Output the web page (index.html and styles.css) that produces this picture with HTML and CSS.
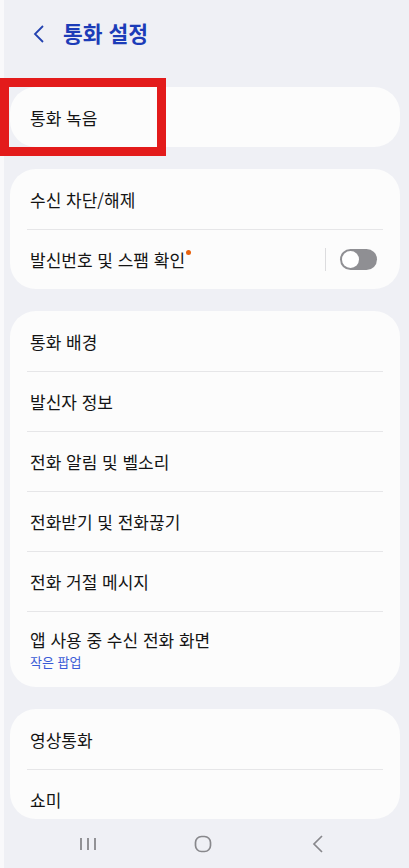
FILE: index.html
```html
<!DOCTYPE html>
<html lang="ko">
<head>
    <meta charset="UTF-8"/>
    <title>통화 설정</title>
    <link rel="stylesheet" href="styles.css">
</head>
<body>
<div class="screen">
    <div class="header">
        <span class="back">
            <svg width="12" height="18" viewBox="0 0 12 18"><path d="M10 1 L2 9 L10 17" fill="none" stroke="#2342b0" stroke-width="1.8"/></svg>
        </span>
        <h1>통화 설정</h1>
    </div>

    <div class="list">
        <div class="card">
            <div class="row">통화 녹음</div>
        </div>

        <div class="card">
            <div class="row">수신 차단/해제</div>
            <div class="row line">
                <span class="label">발신번호 및 스팸 확인<i class="dot"></i></span>
                <span class="sep"></span>
                <span class="toggle"><b></b></span>
            </div>
        </div>

        <div class="card">
            <div class="row">통화 배경</div>
            <div class="row line">발신자 정보</div>
            <div class="row line">전화 알림 및 벨소리</div>
            <div class="row line">전화받기 및 전화끊기</div>
            <div class="row line">전화 거절 메시지</div>
            <div class="row line tall">
                <div>앱 사용 중 수신 전화 화면</div>
                <div class="sub">작은 팝업</div>
            </div>
        </div>

        <div class="card">
            <div class="row">영상통화</div>
            <div class="row line">쇼미</div>
        </div>
    </div>

    <div class="navbar">
        <span class="nav-btn"><svg width="18" height="14" viewBox="0 0 18 14"><path d="M2 1v12M9 1v12M16 1v12" stroke="#88888c" stroke-width="1.8"/></svg></span>
        <span class="nav-btn"><svg width="18" height="18" viewBox="0 0 18 18"><rect x="1.5" y="1.5" width="15" height="15" rx="6" fill="none" stroke="#88888c" stroke-width="1.7"/></svg></span>
        <span class="nav-btn"><svg width="12" height="18" viewBox="0 0 12 18"><path d="M10 1 L2 9 L10 17" fill="none" stroke="#88888c" stroke-width="1.7"/></svg></span>
    </div>

    <!--강조 표시-->
    <div class="mark"></div>
</div>
</body>
</html>
```

FILE: styles.css
```css
* {
    margin: 0;
    padding: 0;
    box-sizing: border-box;
}

body {
    background-color: #f9f9fb;
    font-family: "Noto Sans CJK KR", "Noto Sans", sans-serif;
    color: #141414;
}

.screen {
    position: relative;
    margin-left: 4px;
    height: 868px;
    background-color: #eff0f5;
}

.header {
    height: 87px;
    display: flex;
    align-items: flex-start;
    padding: 22px 0 0 29px;
}

.back {
    width: 12px;
    height: 18px;
    margin-top: 2px;
}

.header h1 {
    margin-left: 18px;
    font-size: 21.5px;
    line-height: 22px;
    font-weight: 700;
    color: #1c3cb8;
}

.list {
    margin: 0 9px 0 6px;
    height: 732px;
    border-radius: 0 0 26px 26px;
    overflow: hidden;
}

.card {
    background-color: #fcfcfc;
    border-radius: 26px;
    margin-bottom: 22px;
}

.row {
    height: 60px;
    padding: 0 17px 0 20px;
    display: flex;
    align-items: center;
    font-size: 17px;
    position: relative;
}

.row.line::before {
    content: "";
    position: absolute;
    left: 17px;
    right: 17px;
    top: 0;
    height: 1px;
    background-color: #e6e6e8;
}

.row.tall {
    height: 76px;
    flex-direction: column;
    align-items: flex-start;
    justify-content: flex-start;
    padding-top: 16px;
    line-height: 25px;
}

.sub {
    font-size: 13px;
    line-height: 19px;
    color: #3a5bd6;
}

.label {
    flex: 1;
    position: relative;
}

.dot {
    display: inline-block;
    width: 5px;
    height: 5px;
    border-radius: 50%;
    background-color: #e8620e;
    vertical-align: top;
    margin: 3px 0 0 1px;
}

.sep {
    width: 1px;
    height: 23px;
    background-color: #dcdcde;
    margin-right: 14px;
}

.toggle {
    width: 37px;
    height: 21px;
    border-radius: 11px;
    background-color: #8f8f93;
    padding: 2px;
    margin-right: 6px;
}

.toggle b {
    display: block;
    width: 17px;
    height: 17px;
    border-radius: 50%;
    background-color: #fff;
}

.navbar {
    height: 49px;
    display: flex;
    align-items: center;
    gap: 91px;
    padding-left: 72px;
}

.nav-btn {
    width: 24px;
    display: flex;
    justify-content: center;
}

.mark {
    position: absolute;
    left: -4px;
    top: 78px;
    width: 166px;
    height: 78px;
    border: 9px solid #e31b1b;
}
```
